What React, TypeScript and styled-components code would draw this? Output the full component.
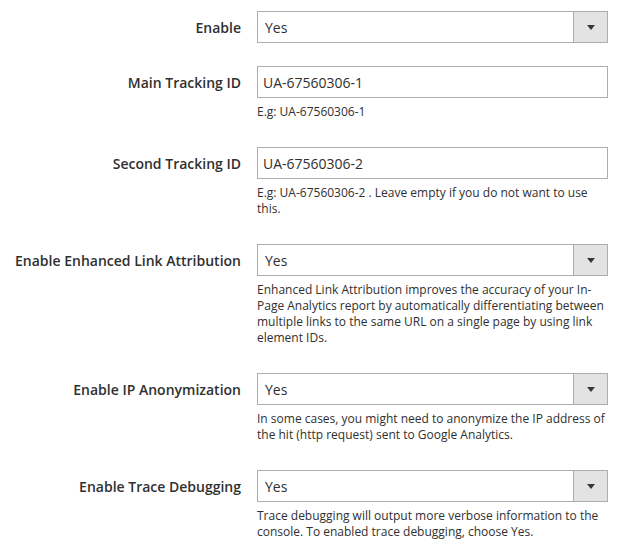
import React from 'react'
import styled, { createGlobalStyle } from 'styled-components'

const GlobalStyle = createGlobalStyle`
  body {
    margin: 0;
    background: #fff;
    font-family: 'Open Sans', 'Liberation Sans', sans-serif;
    color: #303030;
  }
`

const Form = styled.div`
  display: grid;
  grid-template-columns: 241px 351px;
  column-gap: 16px;
  row-gap: 23px;
  padding-top: 11px;
`

const Label = styled.label`
  font-size: 14px;
  font-weight: 600;
  line-height: 30px;
  padding-top: 2px;
  text-align: right;
  white-space: nowrap;
  color: #303030;
`

const Control = styled.div`
  display: flex;
  flex-direction: column;
`

const TextInput = styled.input`
  box-sizing: border-box;
  height: 32px;
  width: 100%;
  margin: 0;
  padding: 1px 5px 0;
  border: 1px solid #adadad;
  border-radius: 0;
  font-family: inherit;
  font-size: 14px;
  color: #303030;
  background: #fff;
  outline: none;
`

const SelectBox = styled.div`
  box-sizing: border-box;
  height: 32px;
  display: flex;
  align-items: stretch;
  border: 1px solid #adadad;
  background: #fff;
`

const SelectValue = styled.span`
  flex: 1;
  padding: 1px 0 0 7px;
  font-size: 14px;
  line-height: 29px;
`

const ArrowButton = styled.span`
  width: 33px;
  display: flex;
  align-items: center;
  justify-content: center;
  background: #e3e3e3;
  border-left: 1px solid #adadad;

  &::after {
    content: '';
    border-left: 4px solid transparent;
    border-right: 4px solid transparent;
    border-top: 5px solid #41362f;
    margin-top: 1px;
  }
`

const Note = styled.div`
  margin: 6px 0 4px;
  font-size: 12px;
  line-height: 16px;
  color: #303030;
`

type Field = {
  label: string
  kind: 'select' | 'text'
  value: string
  note?: string
}

const fields: Field[] = [
  { label: 'Enable', kind: 'select', value: 'Yes' },
  { label: 'Main Tracking ID', kind: 'text', value: 'UA-67560306-1', note: 'E.g: UA-67560306-1' },
  {
    label: 'Second Tracking ID',
    kind: 'text',
    value: 'UA-67560306-2',
    note: 'E.g: UA-67560306-2 . Leave empty if you do not want to use this.',
  },
  {
    label: 'Enable Enhanced Link Attribution',
    kind: 'select',
    value: 'Yes',
    note: 'Enhanced Link Attribution improves the accuracy of your In-Page Analytics report by automatically differentiating between multiple links to the same URL on a single page by using link element IDs.',
  },
  {
    label: 'Enable IP Anonymization',
    kind: 'select',
    value: 'Yes',
    note: 'In some cases, you might need to anonymize the IP address of the hit (http request) sent to Google Analytics.',
  },
  {
    label: 'Enable Trace Debugging',
    kind: 'select',
    value: 'Yes',
    note: 'Trace debugging will output more verbose information to the console. To enabled trace debugging, choose Yes.',
  },
]

export default function App() {
  return (
    <>
      <GlobalStyle />
      <Form>
        {fields.map((f) => (
          <React.Fragment key={f.label}>
            <Label>{f.label}</Label>
            <Control>
              {f.kind === 'select' ? (
                <SelectBox>
                  <SelectValue>{f.value}</SelectValue>
                  <ArrowButton />
                </SelectBox>
              ) : (
                <TextInput defaultValue={f.value} />
              )}
              {f.note && <Note>{f.note}</Note>}
            </Control>
          </React.Fragment>
        ))}
      </Form>
    </>
  )
}
